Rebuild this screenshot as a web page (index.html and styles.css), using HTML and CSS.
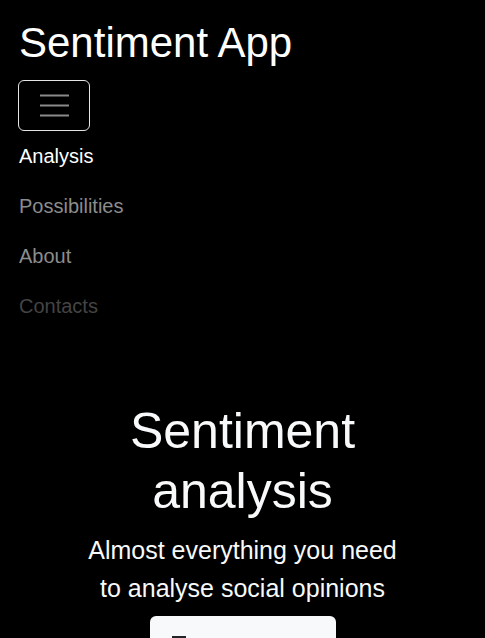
FILE: index.html
```html
<!DOCTYPE html>
<html lang="en">
<head>
<meta charset="utf-8">
<title>Sentiment App</title>
<link rel="stylesheet" href="styles.css">
</head>
<body>
<header class="navbar">
  <a class="brand" href="#">Sentiment App</a>
  <button class="toggler" type="button" aria-label="Toggle navigation">
    <svg class="toggler-icon" width="30" height="30" viewBox="0 0 30 30" aria-hidden="true">
      <path d="M1 7.5h29M1 17.5h29M1 27.5h29" stroke="#8a8a8a" stroke-width="2" stroke-linecap="butt"/>
    </svg>
  </button>
  <nav class="nav">
    <a class="nav-link active" href="#">Analysis</a>
    <a class="nav-link" href="#">Possibilities</a>
    <a class="nav-link" href="#">About</a>
    <a class="nav-link disabled" href="#">Contacts</a>
  </nav>
</header>
<main class="hero">
  <h1 class="hero-title">Sentiment analysis</h1>
  <p class="hero-lead">Almost everything you need to analyse social opinions</p>
  <button class="hero-btn" type="button"><span class="btn-icon"></span></button>
</main>
</body>
</html>
```

FILE: styles.css
```css
html, body {
  margin: 0;
  padding: 0;
  background: #000;
  color: #f8f9fa;
  font-family: "Liberation Sans", Arial, sans-serif;
}
a { text-decoration: none; }
.navbar {
  display: flex;
  flex-direction: column;
  align-items: flex-start;
  padding: 19px 19px 0;
}
.brand {
  color: #fff;
  font-size: 42px;
  line-height: 48px;
}
.toggler {
  margin: 13px 0 0 -1px;
  width: 72px;
  height: 51px;
  box-sizing: border-box;
  background: transparent;
  border: 1px solid #e6e6e6;
  border-radius: 6px;
  padding: 0;
  display: flex;
  align-items: center;
  justify-content: center;
}
.toggler-icon { display: block; margin-top: -6px; }
.nav {
  display: flex;
  flex-direction: column;
}
.nav-link {
  font-size: 20px;
  line-height: 30px;
  padding: 10px 0;
  color: #8c8c8c;
}
.nav-link.active { color: #fff; }
.nav-link.disabled { color: #444; }
.hero {
  display: flex;
  flex-direction: column;
  align-items: center;
  text-align: center;
  padding-top: 70px;
}
.hero-title {
  margin: 0;
  font-weight: 400;
  font-size: 50px;
  line-height: 60px;
  width: 260px;
}
.hero-lead {
  margin: 10px 0 0;
  font-size: 25px;
  line-height: 38px;
  width: 330px;
}
.hero-btn {
  margin-top: 9px;
  width: 186px;
  height: 60px;
  background: #f8f9fa;
  border: none;
  border-radius: 6px;
  padding: 20px 0 0 22px;
  display: flex;
  align-items: flex-start;
}
.btn-icon {
  display: block;
  width: 14px;
  height: 3px;
  background: #212529;
}
```
